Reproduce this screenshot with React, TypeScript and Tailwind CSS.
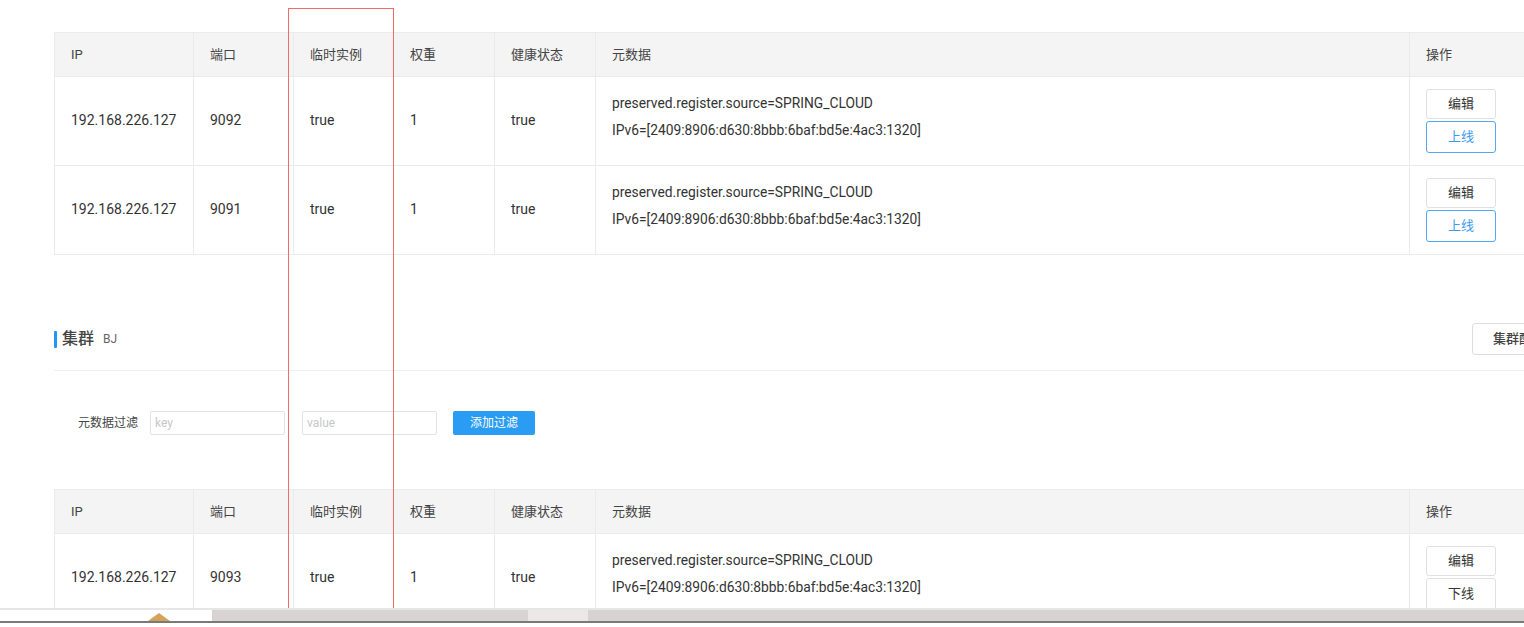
import React from 'react';

const font = { fontFamily: 'Roboto, "Noto Sans CJK SC", sans-serif' };

type Row = { ip: string; port: string; ephemeral: string; weight: string; healthy: string; online: boolean };

const headers = ['IP', '端口', '临时实例', '权重', '健康状态', '元数据', '操作'];

function InstanceTable({ rows }: { rows: Row[] }) {
  return (
    <table className="table-fixed border-collapse w-[1660px] text-[14px] text-[#333]">
      <colgroup>
        <col className="w-[139px]" />
        <col className="w-[100px]" />
        <col className="w-[100px]" />
        <col className="w-[101px]" />
        <col className="w-[101px]" />
        <col className="w-[814px]" />
        <col />
      </colgroup>
      <thead>
        <tr className="h-[44px] bg-[#f4f4f4]">
          {headers.map((h) => (
            <th key={h} className="border border-[#ebebeb] px-4 text-left font-normal text-[13px] text-[#444]">
              {h}
            </th>
          ))}
        </tr>
      </thead>
      <tbody>
        {rows.map((r) => (
          <tr key={r.port} className="h-[89px]">
            <td className="border border-[#ebebeb] px-4 pb-[2px]">{r.ip}</td>
            <td className="border border-[#ebebeb] px-4 pb-[2px]">{r.port}</td>
            <td className="border border-[#ebebeb] px-4 pb-[2px]">{r.ephemeral}</td>
            <td className="border border-[#ebebeb] px-4 pb-[2px]">{r.weight}</td>
            <td className="border border-[#ebebeb] px-4 pb-[2px]">{r.healthy}</td>
            <td className="border border-[#ebebeb] px-4 pb-[8px] text-[13.8px] leading-[27px]">
              <div>preserved.register.source=SPRING_CLOUD</div>
              <div>IPv6=[2409:8906:d630:8bbb:6baf:bd5e:4ac3:1320]</div>
            </td>
            <td className="border border-[#ebebeb] px-4">
              <div className="flex flex-col gap-[2px]">
                <button className="w-[70px] h-[30px] rounded-[3px] border border-[#e0e0e0] bg-white text-[13px] text-[#333]">
                  编辑
                </button>
                {r.online ? (
                  <button className="w-[70px] h-[32px] rounded-[3px] border border-[#52a8f2] bg-white text-[13px] text-[#3d9bef]">
                    上线
                  </button>
                ) : (
                  <button className="w-[70px] h-[32px] rounded-[3px] border border-[#e0e0e0] bg-white text-[13px] text-[#333]">
                    下线
                  </button>
                )}
              </div>
            </td>
          </tr>
        ))}
      </tbody>
    </table>
  );
}

export default function App() {
  const first: Row[] = [
    { ip: '192.168.226.127', port: '9092', ephemeral: 'true', weight: '1', healthy: 'true', online: true },
    { ip: '192.168.226.127', port: '9091', ephemeral: 'true', weight: '1', healthy: 'true', online: true },
  ];
  const second: Row[] = [
    { ip: '192.168.226.127', port: '9093', ephemeral: 'true', weight: '1', healthy: 'true', online: false },
  ];

  return (
    <div className="relative w-[1524px] h-[627px] overflow-hidden bg-white" style={font}>
      <div className="pt-[32px] pl-[54px]">
        <InstanceTable rows={first} />

        {/* cluster header */}
        <div className="mt-[68px] pb-[15px] border-b border-[#efefef] flex items-center justify-between">
          <div className="flex items-center h-[32px]">
            <span className="w-[3px] h-[17px] bg-[#2196f3] rounded-[1px]" />
            <span className="ml-[5px] text-[16px] font-medium text-[#444]">集群</span>
            <span className="ml-[9px] text-[12px] text-[#666]">BJ</span>
          </div>
          <button className="w-[100px] h-[32px] mr-[-48px] rounded-[3px] border border-[#ddd] bg-white text-left pl-[20px] text-[13px] font-medium text-[#444] whitespace-nowrap">
            集群配置
          </button>
        </div>

        {/* metadata filter */}
        <div className="mt-[40px] pl-[24px] flex items-center h-[24px] text-[12px]">
          <span className="text-[#444]">元数据过滤</span>
          <input
            placeholder="key"
            className="ml-[12px] w-[135px] h-[24px] border border-[#e3e3e3] rounded-[2px] px-[4px] text-[12px] placeholder:text-[#c8c8c8] outline-none"
          />
          <input
            placeholder="value"
            className="ml-[17px] w-[135px] h-[24px] border border-[#e3e3e3] rounded-[2px] px-[4px] text-[12px] placeholder:text-[#c8c8c8] outline-none"
          />
          <button className="ml-[16px] w-[82px] h-[24px] rounded-[2px] bg-[#2a9cf3] text-white text-[12px]">
            添加过滤
          </button>
        </div>

        <div className="mt-[54px]">
          <InstanceTable rows={second} />
        </div>
      </div>

      {/* red annotation box */}
      <div className="absolute left-[288px] top-[8px] w-[106px] h-[605px] border border-[#f26a6a] pointer-events-none" />

      {/* taskbar strip at the bottom of the capture */}
      <div className="absolute left-0 right-0 bottom-0 h-[19px] flex flex-col">
        <div className="h-[2px] bg-[#e6e6e6]" />
        <div className="flex h-[11px]">
          <div className="w-[212px] bg-white relative">
            <span className="absolute left-[148px] top-[3px] w-[22px] h-[8px] bg-[#d4a35a] [clip-path:polygon(50%_0,100%_100%,0_100%)]" />
          </div>
          <div className="w-[316px] bg-[#d9d4d4]" />
          <div className="w-[60px] bg-[#ece8e8]" />
          <div className="flex-1 bg-[#d8d3d3]" />
        </div>
        <div className="h-[2px] bg-[#7a7a7a]" />
        <div className="flex-1 bg-white" />
      </div>
    </div>
  );
}
